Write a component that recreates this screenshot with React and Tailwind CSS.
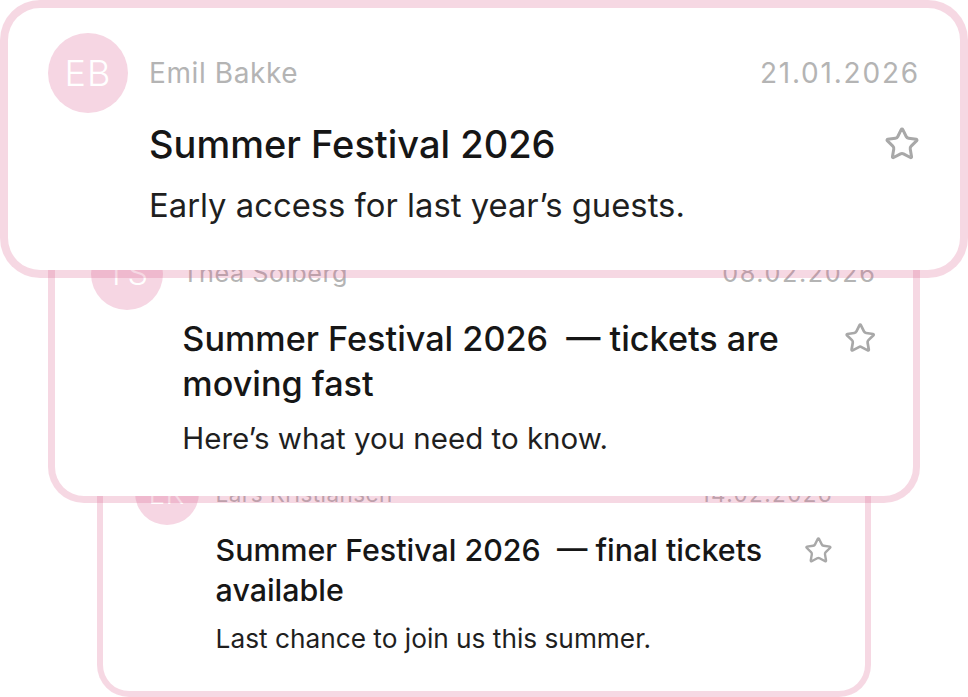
import React from "react";
import { Star } from "lucide-react";

const messages = [
  {
    initials: "EB",
    name: "Emil Bakke",
    date: "21.01.2026",
    title: "Summer Festival 2026",
    body: "Early access for last year’s guests.",
    layer: "relative z-30",
  },
  {
    initials: "TS",
    name: "Thea Solberg",
    date: "08.02.2026",
    title: "Summer Festival 2026\u00a0 — tickets are moving fast",
    body: "Here’s what you need to know.",
    layer: "relative z-20 [zoom:0.9] -mt-[77px]",
  },
  {
    initials: "LK",
    name: "Lars Kristiansen",
    date: "14.02.2026",
    title: "Summer Festival 2026\u00a0 — final tickets available",
    body: "Last chance to join us this summer.",
    layer: "relative z-10 [zoom:0.8] -mt-[85px]",
  },
];

const MessageCard = ({ msg }) => {
  return (
    <div
      className={`${msg.layer} w-[968px] shrink-0 rounded-[40px] border-[8px] border-[#db649140] bg-white bg-clip-padding px-10 pt-[25px] pb-[45px]`}
    >
      <div className="flex gap-[21px]">
        <div className="w-20 h-20 shrink-0 rounded-full bg-[#f6d6e3] flex items-center justify-center text-white text-[36px] font-light tracking-[1px]">
          {msg.initials}
        </div>

        <div className="flex-1 min-w-0">
          <div className="h-20 flex items-center justify-between text-[28px] text-[#b4b4b4]">
            <span className="tracking-[0.6px]">{msg.name}</span>
            <span className="tracking-[1.8px]">{msg.date}</span>
          </div>

          <div className="mt-[6px] flex items-start justify-between gap-10">
            <h2 className="text-[38px] leading-[50px] font-medium text-[#161616]">
              {msg.title}
            </h2>
            <Star
              size={36}
              strokeWidth={2}
              className="shrink-0 mt-[7px] text-[#a8a8a8]"
            />
          </div>

          <p className="mt-4 text-[32.8px] leading-[40px] text-[#1f1f1f]">
            {msg.body}
          </p>
        </div>
      </div>
    </div>
  );
};

export default function App() {
  return (
    <div className="w-[968px] h-[697px] overflow-hidden bg-white flex flex-col items-center font-['Inter','Noto_Sans',sans-serif]">
      {messages.map((msg) => (
        <MessageCard key={msg.name} msg={msg} />
      ))}
    </div>
  );
}
